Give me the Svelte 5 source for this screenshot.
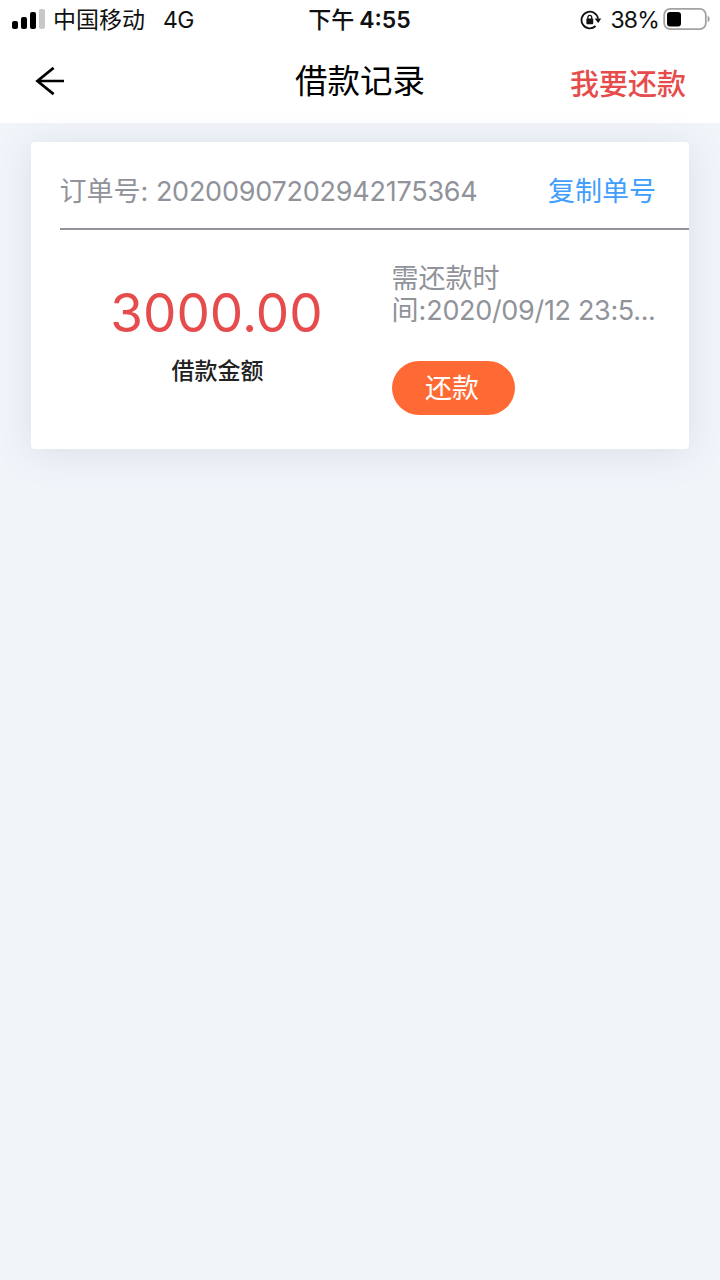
<script lang="ts">
  const order = {
    id: "20200907202942175364",
    amount: "3000.00",
    dueDate: "2020/09/12 23:5...",
  };

  // iOS signal bars, the last one is out of reach
  const bars = [
    { height: 8, on: true },
    { height: 12, on: true },
    { height: 17, on: true },
    { height: 20, on: false },
  ];
</script>

<div class="screen">
  <div class="status-bar">
    <div class="status-left">
      <div class="signal" aria-hidden="true">
        {#each bars as bar}
          <span class="bar" class:on={bar.on} style="height: {bar.height}px"></span>
        {/each}
      </div>
      <span class="carrier">中国移动</span>
      <span class="network">4G</span>
    </div>

    <div class="clock"><span class="period">下午</span><span class="time">4:55</span></div>

    <div class="status-right">
      <svg class="lock" width="22" height="20" viewBox="0 0 22 20" aria-hidden="true">
        <path d="M15.6 16A8.3 8.3 0 1 1 18 8.6" fill="none" stroke="#111" stroke-width="1.8" />
        <path d="M14.6 8.6h6.6l-3 4.4z" fill="#111" />
        <rect x="6.4" y="8.4" width="6.8" height="5.8" rx="0.8" fill="#111" />
        <path d="M7.9 9V7.2a1.9 1.9 0 0 1 3.8 0V9" fill="none" stroke="#111" stroke-width="1.3" />
      </svg>
      <span class="percent">38%</span>
      <svg class="battery" width="48" height="24" viewBox="0 0 48 24" aria-hidden="true">
        <rect x="1.2" y="1.8" width="41.6" height="20.4" rx="6" fill="none" stroke="#a2a2a2" stroke-width="1.8" />
        <rect x="4" y="5" width="14" height="14.4" rx="3" fill="#000" />
        <path d="M44.6 8.8q2.2 1 2.2 3.2t-2.2 3.2z" fill="#a2a2a2" />
      </svg>
    </div>
  </div>

  <header class="nav">
    <button class="back" aria-label="返回">
      <svg width="30" height="30" viewBox="0 0 30 30">
        <path d="M19.6 1.9L3.4 15l16.2 13.1M3 15H30" fill="none" stroke="#000" stroke-width="2.7" />
      </svg>
    </button>
    <h1>借款记录</h1>
    <button class="repay-link">我要还款</button>
  </header>

  <main>
    <section class="card">
      <div class="card-head">
        <span class="order-no">订单号: <span class="digits">{order.id}</span></span>
        <button class="copy">复制单号</button>
      </div>

      <div class="card-body">
        <div class="loan">
          <div class="amount">{order.amount}</div>
          <div class="label">借款金额</div>
        </div>
        <div class="due">
          <p>需还款时<br />间:<span class="date">{order.dueDate}</span></p>
          <button class="pay">还款</button>
        </div>
      </div>
    </section>
  </main>
</div>

<style>
  :global(body) {
    margin: 0;
    background: #f1f5fa;
  }

  .screen {
    min-height: 1280px;
    background: #f1f5fa;
    font-family: Inter, "Noto Sans CJK SC", sans-serif;
    overflow: hidden;
  }

  button {
    margin: 0;
    padding: 0;
    border: 0;
    background: none;
    font: inherit;
    color: inherit;
    white-space: nowrap;
  }

  svg {
    display: block;
  }

  /* Status bar */
  .status-bar {
    display: grid;
    grid-template-columns: 1fr auto 1fr;
    align-items: center;
    height: 40px;
    padding: 0 9px 0 12px;
    background: #fff;
    color: #111;
    font-size: 23px;
    line-height: 40px;
  }

  .status-left,
  .status-right {
    display: flex;
    align-items: center;
  }

  .status-right {
    justify-content: flex-end;
  }

  .signal {
    display: flex;
    align-items: flex-end;
    gap: 3px;
    height: 20px;
    margin: -2px 8px 0 0;
  }

  .bar {
    width: 6px;
    border-radius: 2px;
    background: #c8c8c8;
  }
  .bar.on {
    background: #000;
  }

  .network {
    margin-left: 18px;
    letter-spacing: -0.6px;
  }

  .clock {
    margin-left: -4px;
  }

  .time {
    margin-left: 5px;
    font-weight: 600;
  }

  .period {
    font-weight: 500;
  }

  .lock {
    margin-right: 8px;
  }

  .percent {
    margin-right: 4px;
    letter-spacing: -0.8px;
  }

  .battery {
    margin-top: -2px;
  }

  /* Title row */
  .nav {
    display: grid;
    grid-template-columns: 1fr auto 1fr;
    align-items: center;
    height: 83px;
    padding: 0 34px;
    background: #fff;
  }

  .back {
    justify-self: start;
    margin-top: -2px;
  }

  h1 {
    margin: 0;
    color: #000;
    font-size: 32.5px;
    font-weight: 400;
    line-height: 83px;
  }

  .repay-link {
    justify-self: end;
    color: #e64c4c;
    font-size: 29px;
    font-weight: 500;
  }

  /* Order card */
  main {
    padding: 19px 31px 0 30.5px;
  }

  .card {
    height: 307px;
    border-radius: 4px;
    background: #fff;
    box-shadow: 0 4px 38px rgba(70, 85, 125, 0.13);
    color: #909399;
    font-size: 27px;
  }

  .card-head {
    display: flex;
    align-items: center;
    justify-content: space-between;
    height: 77px;
    margin-left: 29px;
    padding: 9px 33px 0 0;
    border-bottom: 2px solid #909399;
  }

  .digits {
    letter-spacing: -0.24px;
  }

  .date {
    letter-spacing: -0.33px;
  }

  .copy {
    color: #409eff;
  }

  .card-body {
    display: flex;
  }

  .loan {
    width: 361px;
    padding: 50px 0 0 11px;
    box-sizing: border-box;
    text-align: center;
  }

  .amount {
    color: #e64c4c;
    font-size: 53px;
    line-height: 66px;
  }

  .label {
    margin: 8px 0 0 2px;
    color: #222;
    font-size: 23px;
    font-weight: 500;
    line-height: 34px;
  }

  .due {
    padding-top: 33px;
  }

  .due p {
    margin: 0;
    line-height: 32px;
    white-space: nowrap;
  }

  .pay {
    width: 123px;
    height: 54px;
    margin-top: 34px;
    padding: 0 2px 3px 0;
    border-radius: 27px;
    background: #ff6a34;
    color: #fff;
  }
</style>
